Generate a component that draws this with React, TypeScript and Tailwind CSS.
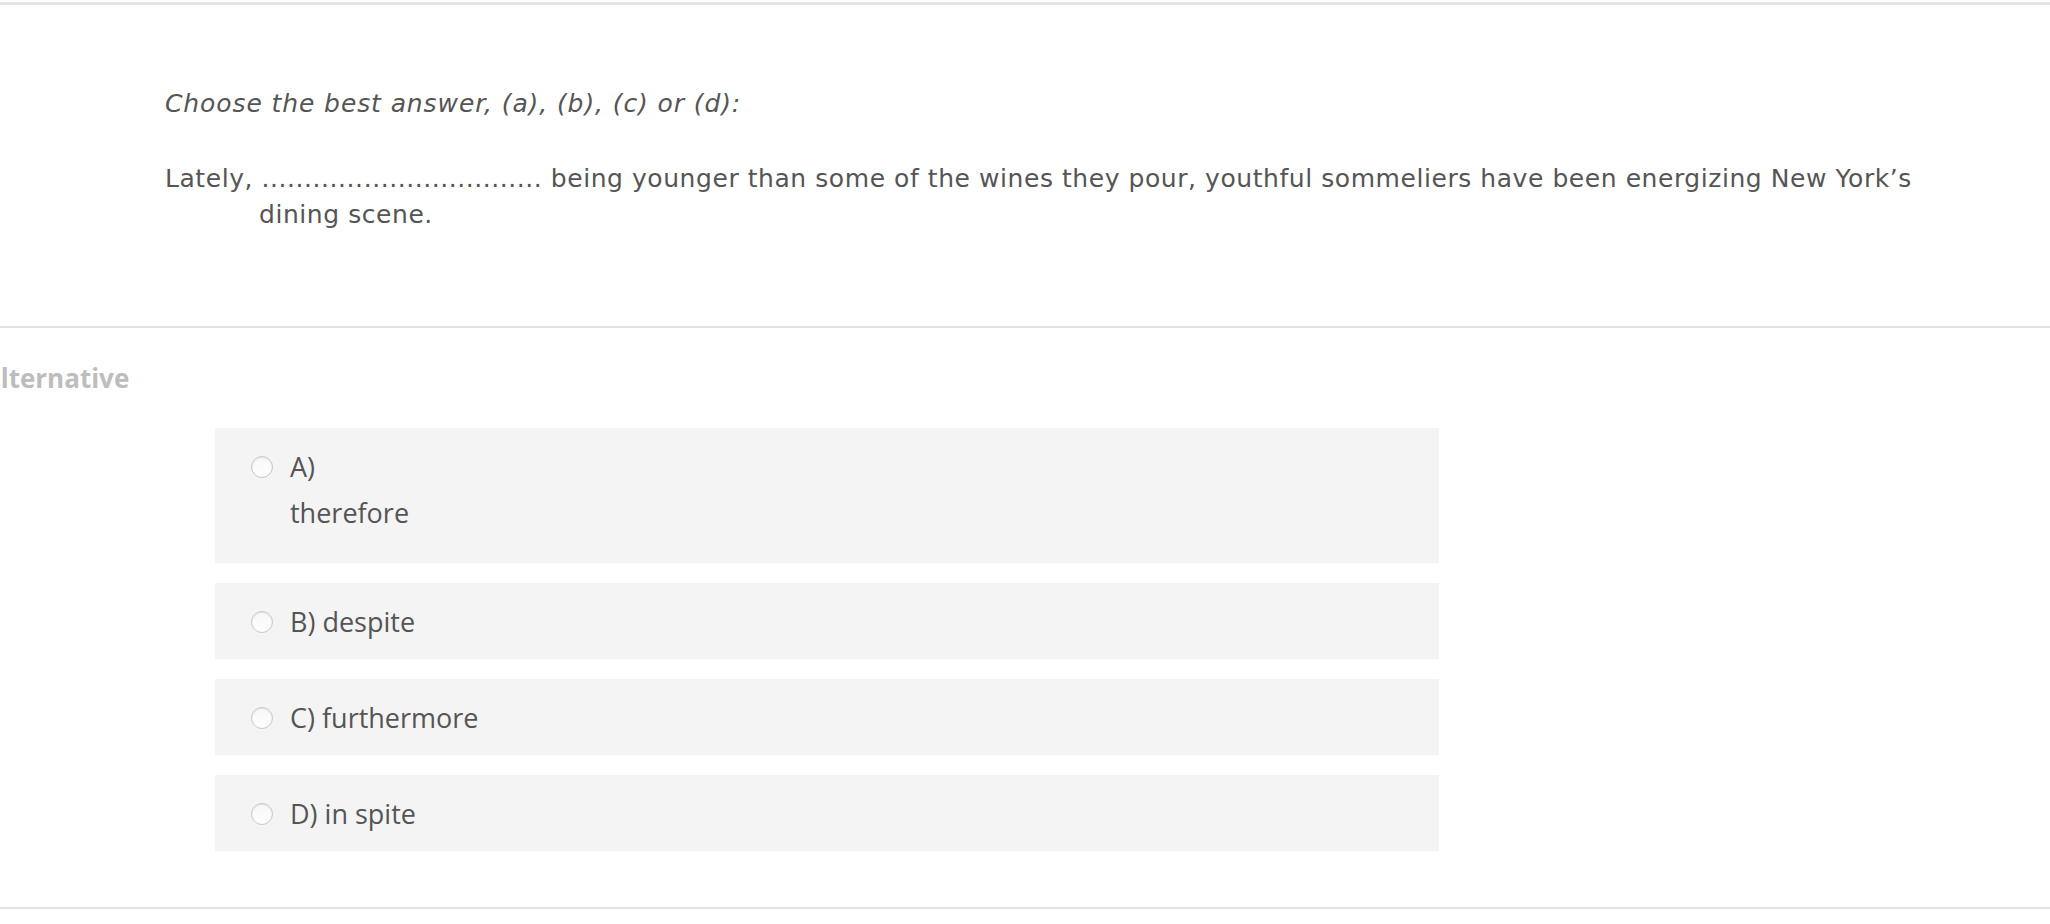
import React from "react";

const options = [
  { key: "A)", text: "therefore", block: true },
  { key: "B)", text: "despite" },
  { key: "C)", text: "furthermore" },
  { key: "D)", text: "in spite" },
];

function Radio() {
  return (
    <span className="mt-[8px] h-[22px] w-[22px] shrink-0 rounded-full border border-[#c8c8c8] bg-gradient-to-b from-[#f7f7f7] to-white shadow-[inset_0_1px_2px_rgba(0,0,0,0.08)]" />
  );
}

export default function App() {
  return (
    <div className="min-h-[924px] w-[2050px] overflow-hidden bg-white text-[#555]">
      <div className="mt-[2px] h-[3px] bg-[#e4e4e4]" />

      {/* question */}
      <div className="pl-[165px] pt-[81px] pb-[93px] font-['DejaVu_Sans',Verdana,sans-serif] text-[25px]">
        <p className="italic leading-[35px] tracking-[0.9px]">Choose the best answer, (a), (b), (c) or (d):</p>
        <p className="mt-[40px] w-[1765px] pl-[94px] -indent-[94px] leading-[36px] tracking-[0.56px]">
          Lately, ................................. being younger than some of the wines they pour, youthful sommeliers
          have been energizing New York’s dining scene.
        </p>
      </div>

      <div className="h-[2px] bg-[#e2e2e2]" />

      {/* alternatives */}
      <div className="font-['Open_Sans',sans-serif]">
        <div className="-ml-[15px] pt-[32px] text-[26px] font-bold leading-[36px] text-[#bdbdbd]">alternative</div>

        <div className="ml-[215px] mt-[32px] flex w-[1224px] flex-col gap-[20px] pb-[56px]">
          {options.map((o) => (
            <label key={o.key} className="flex gap-[17px] bg-[#f4f4f4] pl-[36px] pt-[20px] pb-[18px] text-[27px] leading-[38px]">
              <Radio />
              <div>
                {o.block ? (
                  <>
                    <div>{o.key}</div>
                    <p className="mt-[8px] mb-[13px]">{o.text}</p>
                  </>
                ) : (
                  <div>
                    {o.key} {o.text}
                  </div>
                )}
              </div>
            </label>
          ))}
        </div>
      </div>

      <div className="h-[2px] bg-[#e2e2e2]" />
    </div>
  );
}
